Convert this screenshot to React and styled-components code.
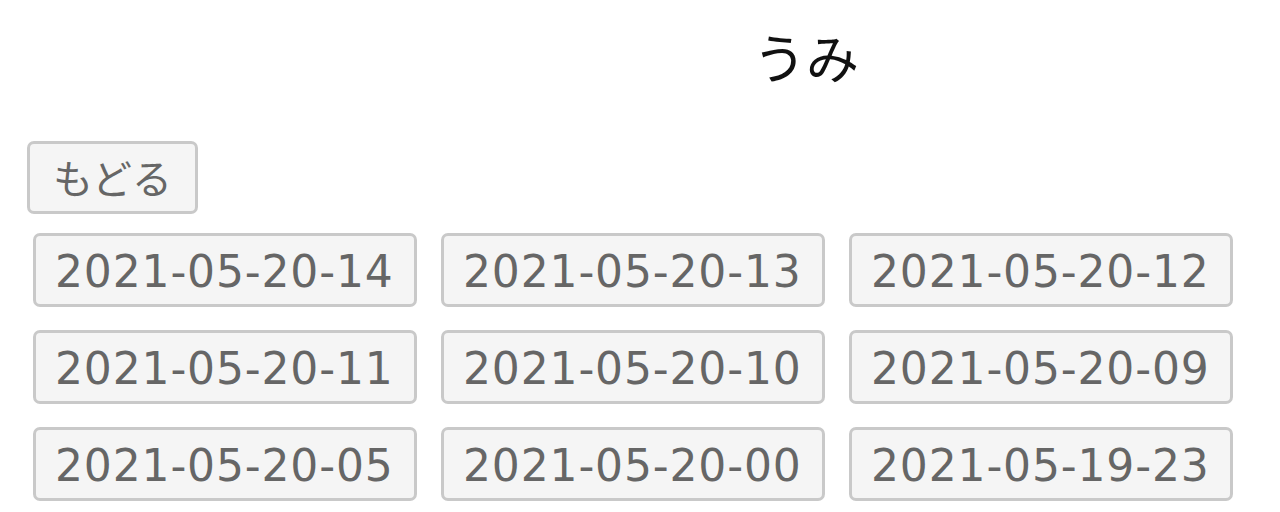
import React from "react";
import styled, { createGlobalStyle } from "styled-components";

const dates = [
  "2021-05-20-14",
  "2021-05-20-13",
  "2021-05-20-12",
  "2021-05-20-11",
  "2021-05-20-10",
  "2021-05-20-09",
  "2021-05-20-05",
  "2021-05-20-00",
  "2021-05-19-23",
];

const GlobalStyle = createGlobalStyle`
  html, body {
    margin: 0;
    padding: 0;
    background: #fff;
    font-family: "DejaVu Sans", "Noto Sans CJK JP", sans-serif;
  }
`;

const Page = styled.div`
  width: 1280px;
  height: 512px;
  overflow: hidden;
  box-sizing: border-box;
  padding: 20px 0 0 27px;
`;

const Title = styled.h1`
  margin: 0 0 41px 0;
  padding-left: 726px;
  height: 80px;
  line-height: 72px;
  font-family: "Noto Sans CJK JP", sans-serif;
  font-weight: 400;
  font-size: 53px;
  color: #111;
`;

const BaseButton = styled.button`
  box-sizing: border-box;
  height: 74px;
  border: 3px solid #c9c9c9;
  border-radius: 7px;
  background: #f5f5f5;
  color: #666;
  font-family: "DejaVu Sans", "Noto Sans CJK JP", sans-serif;
  padding: 0;
  cursor: pointer;
`;

const BackButton = styled(BaseButton)`
  width: 171px;
  height: 73px;
  font-family: "Noto Sans CJK JP", sans-serif;
  font-size: 40px;
  line-height: 1;
  padding-bottom: 2px;
  margin-bottom: 19px;
  display: block;
`;

const Grid = styled.div`
  display: grid;
  grid-template-columns: repeat(3, 384px);
  column-gap: 24px;
  row-gap: 23px;
  padding-left: 6px;
`;

const DateButton = styled(BaseButton)`
  width: 384px;
  font-size: 44px;
  line-height: 1;
  text-align: left;
  padding: 4px 0 0 19px;
  letter-spacing: 0.85px;
`;

export default function App() {
  return (
    <>
      <GlobalStyle />
      <Page>
        <Title>うみ</Title>
        <BackButton>もどる</BackButton>
        <Grid>
          {dates.map((d) => (
            <DateButton key={d}>{d}</DateButton>
          ))}
        </Grid>
      </Page>
    </>
  );
}
